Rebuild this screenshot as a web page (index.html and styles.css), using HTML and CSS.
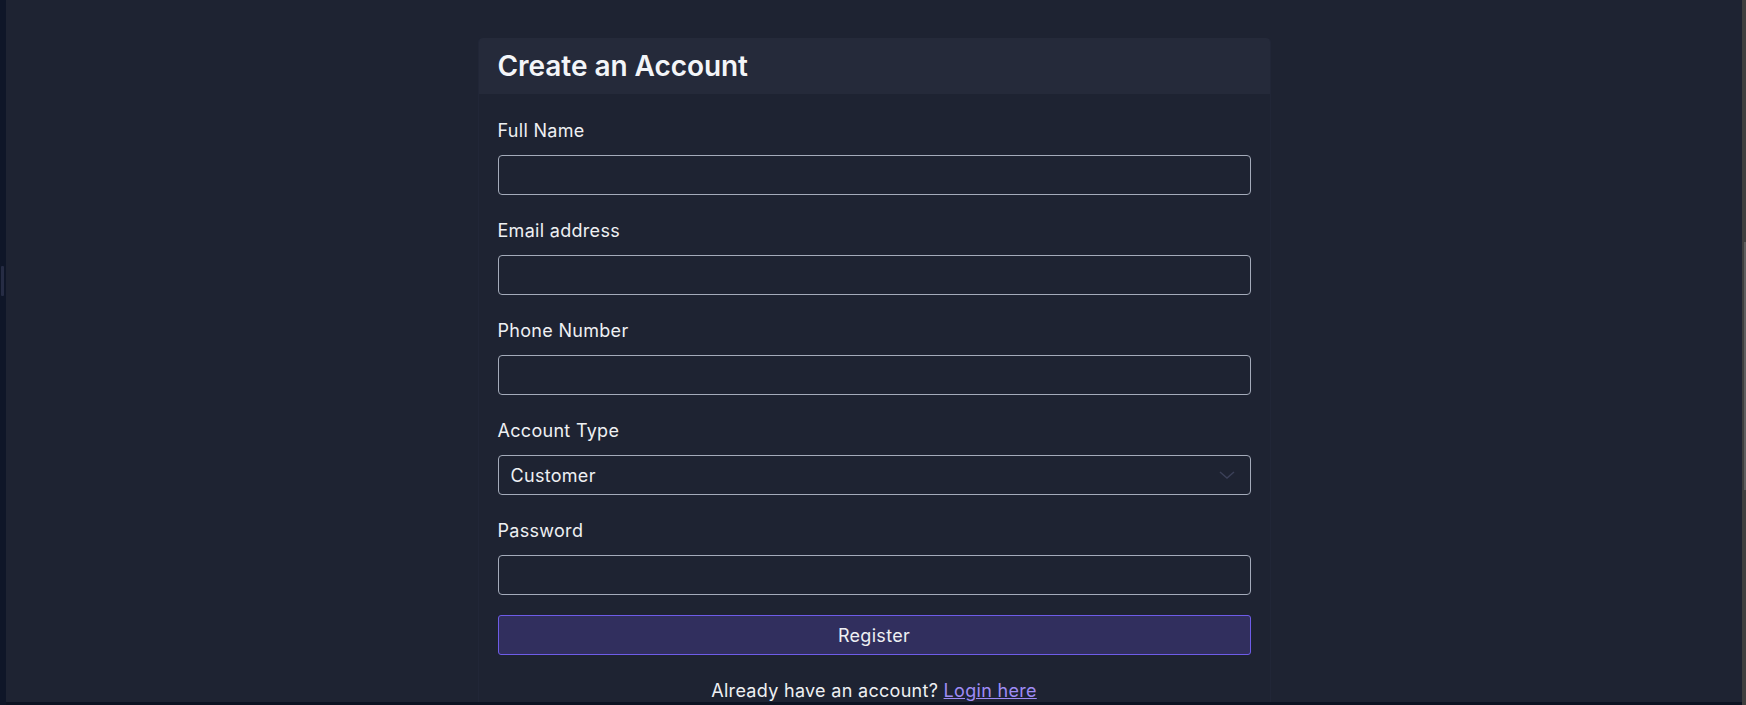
FILE: index.html
```html
<!DOCTYPE html>
<html lang="en">
<head>
<meta charset="utf-8">
<title>Create an Account</title>
<link rel="stylesheet" href="styles.css">
</head>
<body>
<div class="frame">
  <div class="side-strip"><span class="handle"></span></div>
  <div class="column">
    <main class="main">
      <section class="card">
        <header class="card-header">
          <h1 class="card-title">Create an Account</h1>
        </header>
        <form class="card-body">
          <div class="field">
            <label class="field-label" for="fullname">Full Name</label>
            <input class="field-input" id="fullname" type="text">
          </div>
          <div class="field">
            <label class="field-label" for="email">Email address</label>
            <input class="field-input" id="email" type="email">
          </div>
          <div class="field">
            <label class="field-label" for="phone">Phone Number</label>
            <input class="field-input" id="phone" type="tel">
          </div>
          <div class="field">
            <label class="field-label" for="type">Account Type</label>
            <div class="select-wrap">
              <select class="field-input field-select" id="type">
                <option>Customer</option>
              </select>
              <svg class="chevron" width="16" height="8" viewBox="0 0 16 8"><path d="M1 1 L8 7 L15 1" fill="none" stroke="#3b4058" stroke-width="1.5"/></svg>
            </div>
          </div>
          <div class="field">
            <label class="field-label" for="password">Password</label>
            <input class="field-input" id="password" type="password">
          </div>
          <button class="btn-register" type="button">Register</button>
          <p class="login-note">Already have an account? <a class="login-link" href="#">Login here</a></p>
        </form>
      </section>
    </main>
    <div class="bottom-strip"></div>
  </div>
  <div class="scrollbar"><span class="thumb"></span></div>
</div>
</body>
</html>
```
FILE: styles.css
```css
* { box-sizing: border-box; }
html, body { margin: 0; height: 100%; }
body {
  background: #0e1425;
  font-family: Inter, "Noto Sans", sans-serif;
  color: #eef0f3;
  overflow: hidden;
}
.frame {
  display: flex;
  height: 705px;
}
.side-strip {
  width: 6px;
  flex: none;
  background: #0f1628;
  position: relative;
}
.handle {
  position: absolute;
  left: 1px;
  top: 266px;
  width: 3px;
  height: 30px;
  border-radius: 1px;
  background: #262c44;
}
.column {
  flex: 1;
  display: flex;
  flex-direction: column;
}
.main {
  flex: 1;
  background: #1e2332;
  overflow: hidden;
  padding-top: 38px;
}
.bottom-strip {
  height: 3px;
  background: #0d1322;
}
.scrollbar {
  width: 4px;
  flex: none;
  background: #3f3f3f;
  position: relative;
}
.thumb {
  position: absolute;
  left: 2px;
  top: 242px;
  width: 2px;
  height: 248px;
  background: #5e5e5e;
}
.card {
  width: 793px;
  margin: 0 auto;
  border: 1px solid #212637;
  border-top: none;
  border-radius: 4px;
  background: #1e2332;
}
.card-header {
  height: 56px;
  background: #252a3a;
  border-radius: 4px 4px 0 0;
  display: flex;
  align-items: center;
  padding: 0 19px;
}
.card-title {
  margin: 0;
  font-size: 28px;
  font-weight: 600;
  color: #f3f5f8;
  letter-spacing: -0.05px;
}
.card-body {
  padding: 23px 19px 20px;
  display: flex;
  flex-direction: column;
  letter-spacing: 0.3px;
}
.field {
  display: flex;
  flex-direction: column;
  margin-bottom: 22px;
}
.field-label {
  font-size: 18px;
  line-height: 27px;
  margin-bottom: 11px;
  color: #eef0f3;
}
.field-input {
  height: 40px;
  width: 100%;
  background: #1e2332;
  border: 1px solid #a4abba;
  border-radius: 4px;
  color: #eef0f3;
  font-family: inherit;
  font-size: 18px;
  letter-spacing: 0.3px;
  padding: 0 12px;
  outline: none;
}
.select-wrap {
  position: relative;
}
.field-select {
  appearance: none;
  -webkit-appearance: none;
}
.chevron {
  position: absolute;
  right: 16px;
  top: 16px;
}
.btn-register {
  margin-top: -2px;
  height: 40px;
  width: 100%;
  background: #312f5e;
  border: 1px solid #6e5ce8;
  border-radius: 3px;
  color: #eef0f3;
  font-family: inherit;
  font-size: 18px;
  letter-spacing: 0.3px;
}
.login-note {
  margin: 22px 0 0;
  text-align: center;
  font-size: 18px;
  line-height: 27px;
  color: #eef0f3;
}
.login-link {
  color: #9f8cf6;
  text-decoration: underline;
}
```
